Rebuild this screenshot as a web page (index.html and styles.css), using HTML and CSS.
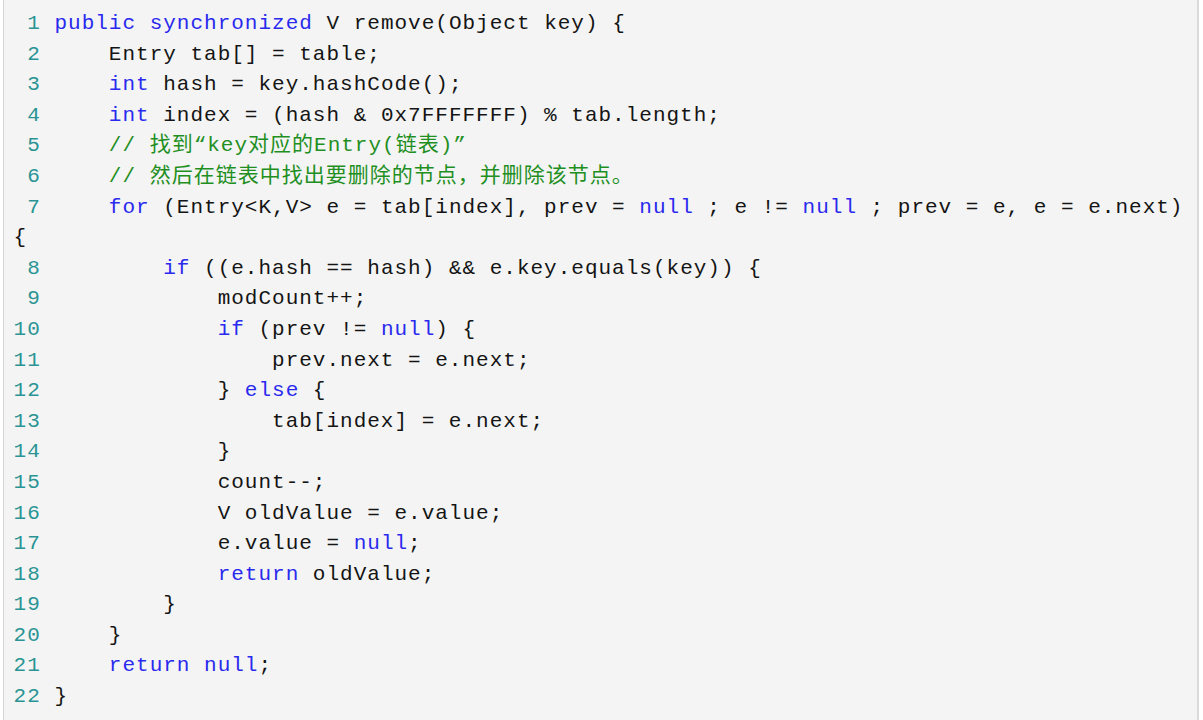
FILE: index.html
```html
<!DOCTYPE html>
<html lang="zh-CN">
<head>
<meta charset="utf-8">
<title>Hashtable remove</title>
<link rel="stylesheet" href="styles.css">
</head>
<body>
<div class="code">
<div class="ln"><span class="no"> 1</span> <span class="kw">public</span> <span class="kw">synchronized</span> V remove(Object key) {</div>
<div class="ln"><span class="no"> 2</span>     Entry tab[] = table;</div>
<div class="ln"><span class="no"> 3</span>     <span class="kw">int</span> hash = key.hashCode();</div>
<div class="ln"><span class="no"> 4</span>     <span class="kw">int</span> index = (hash &amp; 0x7FFFFFFF) % tab.length;</div>
<div class="ln"><span class="no"> 5</span>     <span class="cm">// 找到“key对应的Entry(链表)”</span></div>
<div class="ln"><span class="no"> 6</span>     <span class="cm">// 然后在链表中找出要删除的节点，并删除该节点。</span></div>
<div class="ln"><span class="no"> 7</span>     <span class="kw">for</span> (Entry&lt;K,V&gt; e = tab[index], prev = <span class="kw">null</span> ; e != <span class="kw">null</span> ; prev = e, e = e.next)</div>
<div class="ln">{</div>
<div class="ln"><span class="no"> 8</span>         <span class="kw">if</span> ((e.hash == hash) &amp;&amp; e.key.equals(key)) {</div>
<div class="ln"><span class="no"> 9</span>             modCount++;</div>
<div class="ln"><span class="no">10</span>             <span class="kw">if</span> (prev != <span class="kw">null</span>) {</div>
<div class="ln"><span class="no">11</span>                 prev.next = e.next;</div>
<div class="ln"><span class="no">12</span>             } <span class="kw">else</span> {</div>
<div class="ln"><span class="no">13</span>                 tab[index] = e.next;</div>
<div class="ln"><span class="no">14</span>             }</div>
<div class="ln"><span class="no">15</span>             count--;</div>
<div class="ln"><span class="no">16</span>             V oldValue = e.value;</div>
<div class="ln"><span class="no">17</span>             e.value = <span class="kw">null</span>;</div>
<div class="ln"><span class="no">18</span>             <span class="kw">return</span> oldValue;</div>
<div class="ln"><span class="no">19</span>         }</div>
<div class="ln"><span class="no">20</span>     }</div>
<div class="ln"><span class="no">21</span>     <span class="kw">return</span> <span class="kw">null</span>;</div>
<div class="ln"><span class="no">22</span> }</div>
</div>
</body>
</html>
```
FILE: styles.css
```css
html, body {
  margin: 0;
  padding: 0;
  background: #ffffff;
}

.code {
  margin: 0 4px 0 3px;
  min-height: 720px;
  box-sizing: border-box;
  padding: 9px 0 8px 9.6px;
  background: #f4f4f4;
  border-left: 1px solid #d4d4d4;
  border-right: 2px solid #dadada;
  font-family: "Liberation Mono", "Noto Sans CJK SC", monospace;
  font-size: 21px;
  letter-spacing: 1px;
  line-height: 30.6px;
  color: #141414;
}

.ln {
  white-space: pre;
  height: 30.6px;
}

.no {
  color: #2a9494;
}

.kw {
  color: #2a2aee;
}

.cm {
  color: #1f8f1f;
}
```
